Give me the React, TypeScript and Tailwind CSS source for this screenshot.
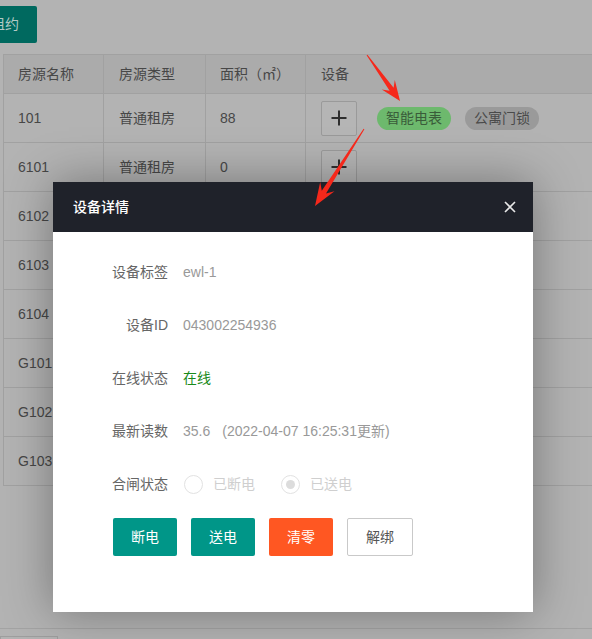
import React from "react";

const FONT = { fontFamily: '"Liberation Sans", "Noto Sans CJK SC", sans-serif' };

function arrowPoints(
  x1: number,
  y1: number,
  x2: number,
  y2: number,
  headLen: number,
  headW: number,
  neckW: number,
  tailW: number
) {
  const dx = x2 - x1;
  const dy = y2 - y1;
  const len = Math.hypot(dx, dy);
  const ux = dx / len;
  const uy = dy / len;
  const px = -uy;
  const py = ux;
  const wbx = x2 - ux * headLen;
  const wby = y2 - uy * headLen;
  const nbx = x2 - ux * headLen * 0.72;
  const nby = y2 - uy * headLen * 0.72;
  const pts: [number, number][] = [
    [x1 + (px * tailW) / 2, y1 + (py * tailW) / 2],
    [nbx + (px * neckW) / 2, nby + (py * neckW) / 2],
    [wbx + (px * headW) / 2, wby + (py * headW) / 2],
    [x2, y2],
    [wbx - (px * headW) / 2, wby - (py * headW) / 2],
    [nbx - (px * neckW) / 2, nby - (py * neckW) / 2],
    [x1 - (px * tailW) / 2, y1 - (py * tailW) / 2],
  ];
  return pts.map((p) => `${p[0].toFixed(1)},${p[1].toFixed(1)}`).join(" ");
}

const rows = [
  { name: "101", type: "普通租房", area: "88", tags: true },
  { name: "6101", type: "普通租房", area: "0", tags: false },
  { name: "6102", type: "普通租房", area: "0", tags: false },
  { name: "6103", type: "普通租房", area: "0", tags: false },
  { name: "6104", type: "普通租房", area: "0", tags: false },
  { name: "G101", type: "普通租房", area: "0", tags: false },
  { name: "G102", type: "普通租房", area: "0", tags: false },
  { name: "G103", type: "普通租房", area: "0", tags: false },
];

function PlusBox() {
  return (
    <div className="w-[36px] h-[35px] border border-[#9a9a9a] rounded-[2px] bg-[#b5b5b5] flex items-center justify-center shrink-0">
      <svg width="18" height="18" viewBox="0 0 18 18">
        <path d="M9 1.5V16.5M1.5 9H16.5" stroke="#2e2e2e" strokeWidth="2" />
      </svg>
    </div>
  );
}

function FormRow({ label, children }: { label: string; children: React.ReactNode }) {
  return (
    <div className="flex items-center h-[38px] mb-[15px]">
      <div className="w-[115px] text-right text-[14px] text-[#666]">{label}</div>
      <div className="ml-[15px] text-[14px] text-[#999] flex items-center">{children}</div>
    </div>
  );
}

function Radio({ checked, label }: { checked?: boolean; label: string }) {
  return (
    <div className="flex items-center">
      <div className="w-[19px] h-[19px] rounded-full border border-[#e2e2e2] flex items-center justify-center bg-white">
        {checked && <div className="w-[9px] h-[9px] rounded-full bg-[#dcdcdc]" />}
      </div>
      <span className="ml-[10px] text-[14px] text-[#cfcfcf]">{label}</span>
    </div>
  );
}

export default function App() {
  return (
    <div
      className="relative w-[592px] h-[639px] overflow-hidden bg-[#b3b3b3] text-[14px]"
      style={FONT}
    >
      {/* page (under overlay colors) */}
      <div className="pt-[6px]">
        <div className="flex">
          <div className="ml-[-55px] h-[37px] px-[18px] rounded-[2px] bg-[#00695f] text-[#b3c9c6] flex items-center text-[14px]">
            新增租约
          </div>
        </div>

        <div className="mt-[11px] ml-[3px] w-[800px] border-t border-l border-[#a1a1a1]">
          {/* header */}
          <div className="flex h-[39px] border-b border-[#a1a1a1] bg-[#ababab] text-[#474747]">
            <div className="w-[100px] pl-[14px] border-r border-[#a1a1a1] flex items-center">房源名称</div>
            <div className="w-[102px] pl-[15px] border-r border-[#a1a1a1] flex items-center">房源类型</div>
            <div className="w-[100px] pl-[14px] border-r border-[#a1a1a1] flex items-center">面积（㎡）</div>
            <div className="flex-1 pl-[15px] flex items-center">设备</div>
          </div>
          {rows.map((r) => (
            <div key={r.name} className="flex h-[49px] border-b border-[#a1a1a1] text-[#474747]">
              <div className="w-[100px] pl-[14px] border-r border-[#a1a1a1] flex items-center">{r.name}</div>
              <div className="w-[102px] pl-[15px] border-r border-[#a1a1a1] flex items-center">{r.type}</div>
              <div className="w-[100px] pl-[14px] border-r border-[#a1a1a1] flex items-center">{r.area}</div>
              <div className="flex-1 pl-[15px] flex items-center">
                <PlusBox />
                {r.tags && (
                  <div className="flex items-center ml-[20px] gap-[14px]">
                    <span className="h-[23px] px-[9px] rounded-full bg-[#6db96d] text-[#3a5c3a] flex items-center">
                      智能电表
                    </span>
                    <span className="h-[23px] px-[9px] rounded-full bg-[#9a9a9a] text-[#4a4a4a] flex items-center">
                      公寓门锁
                    </span>
                  </div>
                )}
              </div>
            </div>
          ))}
        </div>

        <div className="mt-[142px] border-t border-[#a3a3a3]">
          <div className="mt-[7px] w-[58px] h-[6px] border border-[#9e9e9e]" />
        </div>
      </div>

      {/* modal */}
      <div className="absolute left-[53px] top-[182px] w-[480px] h-[430px] bg-white shadow-[0_0_45px_rgba(0,0,0,0.35)]">
        <div className="h-[50px] bg-[#1f222a] flex items-center justify-between pl-[20px] pr-[17px]">
          <span className="text-white text-[14px] font-medium">设备详情</span>
          <svg width="12" height="12" viewBox="0 0 12 12">
            <path d="M1 1L11 11M11 1L1 11" stroke="#e8e8e8" strokeWidth="1.6" />
          </svg>
        </div>
        <div className="pt-[21px]">
          <FormRow label="设备标签">ewl-1</FormRow>
          <FormRow label="设备ID">043002254936</FormRow>
          <FormRow label="在线状态">
            <span className="text-[#1a8a1a]">在线</span>
          </FormRow>
          <FormRow label="最新读数">
            <span>35.6</span>
            <span className="ml-[12px]">(2022-04-07 16:25:31更新)</span>
          </FormRow>
          <div className="flex items-center h-[38px]">
            <div className="w-[115px] text-right text-[14px] text-[#666]">合闸状态</div>
            <div className="ml-[16px] flex items-center gap-[26px]">
              <Radio label="已断电" />
              <Radio checked label="已送电" />
            </div>
          </div>
          <div className="mt-[15px] ml-[60px] flex gap-[14px]">
            <button className="w-[64px] h-[38px] rounded-[2px] bg-[#009688] text-white text-[14px]">断电</button>
            <button className="w-[64px] h-[38px] rounded-[2px] bg-[#009688] text-white text-[14px]">送电</button>
            <button className="w-[64px] h-[38px] rounded-[2px] bg-[#ff5722] text-white text-[14px]">清零</button>
            <button className="w-[66px] h-[38px] rounded-[2px] bg-white border border-[#c9c9c9] text-[#555] text-[14px]">
              解绑
            </button>
          </div>
        </div>
      </div>

      {/* annotation arrows */}
      <svg className="absolute inset-0 pointer-events-none" width="592" height="639" viewBox="0 0 592 639">
        <polygon points={arrowPoints(367, 55, 400, 101, 20, 16, 5, 1)} fill="#f5281b" />
        <polygon points={arrowPoints(364, 129, 315, 206, 23, 17, 5, 1)} fill="#f5281b" />
      </svg>
    </div>
  );
}
